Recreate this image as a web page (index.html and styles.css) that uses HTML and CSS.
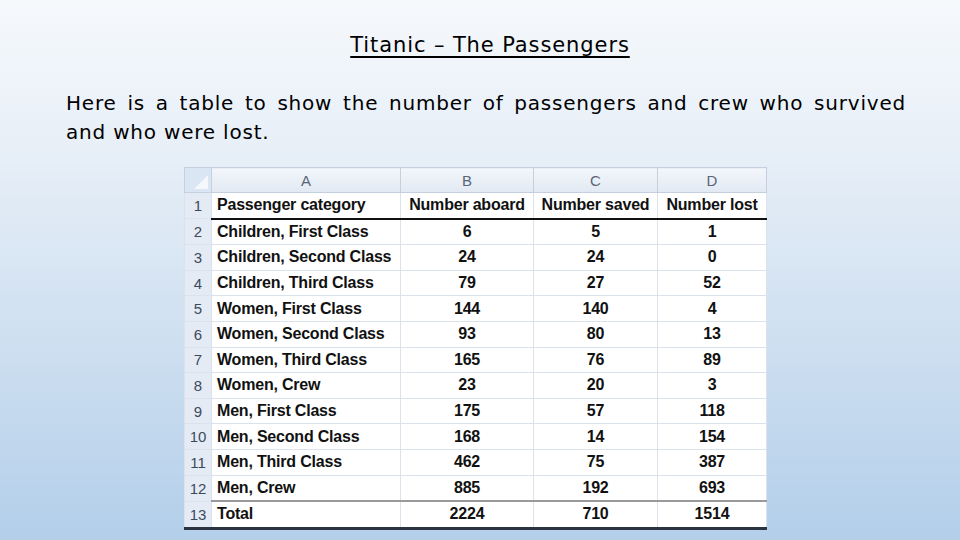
FILE: index.html
```html
<!DOCTYPE html>
<html>
<head>
<meta charset="utf-8">
<link rel="stylesheet" href="styles.css">
</head>
<body>
<div class="slide">
  <h1 class="title">Titanic – The Passengers</h1>
  <p class="intro">Here is a table to show the number of passengers and crew who survived and who were lost.</p>
  <div class="sheet-wrap">
    <table class="sheet">
      <colgroup>
        <col class="c-num"><col class="c-a"><col class="c-b"><col class="c-c"><col class="c-d">
      </colgroup>
      <thead>
        <tr class="letters">
          <th class="corner"><span class="tri"></span></th><th>A</th><th>B</th><th>C</th><th>D</th>
        </tr>
      </thead>
      <tbody>
        <tr class="head"><th>1</th><td class="l">Passenger category</td><td>Number aboard</td><td>Number saved</td><td>Number lost</td></tr>
        <tr><th>2</th><td class="l">Children, First Class</td><td>6</td><td>5</td><td>1</td></tr>
        <tr><th>3</th><td class="l">Children, Second Class</td><td>24</td><td>24</td><td>0</td></tr>
        <tr><th>4</th><td class="l">Children, Third Class</td><td>79</td><td>27</td><td>52</td></tr>
        <tr><th>5</th><td class="l">Women, First Class</td><td>144</td><td>140</td><td>4</td></tr>
        <tr><th>6</th><td class="l">Women, Second Class</td><td>93</td><td>80</td><td>13</td></tr>
        <tr><th>7</th><td class="l">Women, Third Class</td><td>165</td><td>76</td><td>89</td></tr>
        <tr><th>8</th><td class="l">Women, Crew</td><td>23</td><td>20</td><td>3</td></tr>
        <tr><th>9</th><td class="l">Men, First Class</td><td>175</td><td>57</td><td>118</td></tr>
        <tr><th>10</th><td class="l">Men, Second Class</td><td>168</td><td>14</td><td>154</td></tr>
        <tr><th>11</th><td class="l">Men, Third Class</td><td>462</td><td>75</td><td>387</td></tr>
        <tr class="last"><th>12</th><td class="l">Men, Crew</td><td>885</td><td>192</td><td>693</td></tr>
        <tr class="total"><th>13</th><td class="l">Total</td><td>2224</td><td>710</td><td>1514</td></tr>
      </tbody>
    </table>
  </div>
</div>
</body>
</html>
```
FILE: styles.css
```css
html, body {
  margin: 0;
  padding: 0;
}
body {
  width: 960px;
  height: 540px;
  overflow: hidden;
  background: linear-gradient(to bottom, #f6f9fc 0%, #e6eef7 30%, #c9dcef 70%, #b3cfea 100%);
}
.slide {
  width: 960px;
  height: 540px;
  display: flex;
  flex-direction: column;
}
.title {
  margin: 31px 0 0 0;
  text-align: center;
  font-family: "DejaVu Sans", sans-serif;
  font-weight: normal;
  font-size: 21px;
  letter-spacing: 0.9px;
  line-height: 28px;
  color: #000;
  text-decoration: underline;
  text-decoration-thickness: 1.5px;
  text-underline-offset: 4px;
  padding-left: 20px;
}
.intro {
  margin: 30px 0 0 66px;
  width: 840px;
  font-family: "DejaVu Sans", sans-serif;
  font-size: 20px;
  letter-spacing: 0.8px;
  line-height: 29px;
  color: #000;
  text-align: justify;
}
.sheet-wrap {
  margin: 20px 0 0 184px;
}
.sheet {
  border-collapse: collapse;
  background: #fff;
  font-family: "Liberation Sans", Arial, sans-serif;
  font-size: 16px;
  table-layout: fixed;
  width: 582px;
}
.c-num { width: 27px; }
.c-a { width: 189px; }
.c-b { width: 133px; }
.c-c { width: 124px; }
.c-d { width: 109px; }
.sheet th, .sheet td {
  height: 24.6px;
  padding: 0;
  border: 1px solid #dbe2ec;
  text-align: center;
  white-space: nowrap;
  overflow: hidden;
}
.letters th {
  height: 24px;
  background: linear-gradient(to bottom, #f3f6fb, #e1e9f3);
  border: 1px solid #c5d0de;
  font-weight: normal;
  color: #5a6677;
  font-size: 15px;
}
.letters th.corner {
  background: #dbe6f4;
  position: relative;
}
.tri {
  position: absolute;
  right: 3px;
  bottom: 3px;
  width: 0;
  height: 0;
  border-left: 14px solid transparent;
  border-bottom: 14px solid #f4f7fb;
}
tbody th {
  background: #e4ebf5;
  border-color: #c5d0de;
  font-weight: normal;
  color: #3d4a5c;
  font-size: 15px;
}
tbody td {
  font-weight: bold;
  color: #111;
  letter-spacing: -0.2px;
}
tbody td.l {
  text-align: left;
  padding-left: 5px;
}
.head td {
  border-bottom: 2px solid #111;
}
.last td {
  border-bottom: 2px solid #9a9a9a;
}
.total td, .total th {
  border-bottom: 3px solid #2c3340;
}
```
